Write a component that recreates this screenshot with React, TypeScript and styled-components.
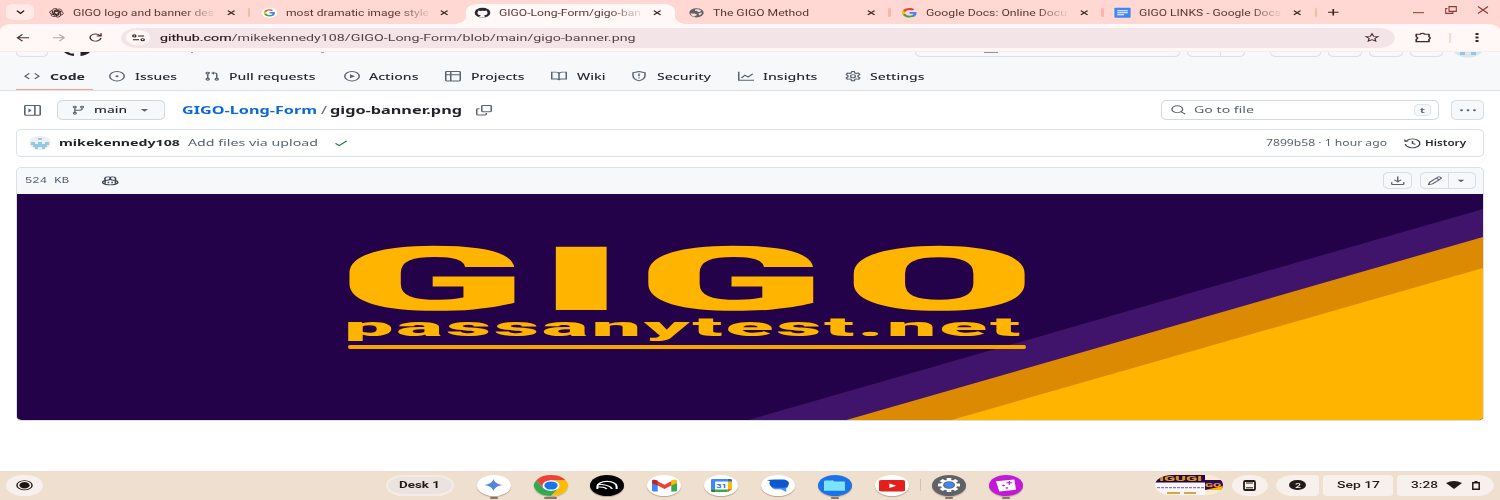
import React, { useLayoutEffect, useRef } from "react";
import styled, { createGlobalStyle, css } from "styled-components";

const Global = createGlobalStyle`
  html, body { margin: 0; padding: 0; }
  body { width: 1500px; height: 500px; overflow: hidden; background: #fff; }
  * { box-sizing: border-box; }
`;

/* ---------- shared parts ---------- */

const FitBox = styled.span<{ $w: number; $ml?: number; $fade?: boolean }>`
  display: block;
  flex: none;
  width: ${p => p.$w}px;
  margin-left: ${p => p.$ml ?? 0}px;
  white-space: pre;
  ${p => p.$fade && css`mask-image: linear-gradient(90deg, #000 78%, rgba(0, 0, 0, 0.1) 100%);`}
`;
const FitInner = styled.span`
  display: inline-block;
  transform-origin: 0 50%;
`;

/* Text that is widened to fill exactly `w` pixels. */
function Fit({ w, ml, fade, className, children }: { w: number; ml?: number; fade?: boolean; className?: string; children: React.ReactNode }) {
  const ref = useRef<HTMLSpanElement>(null);
  useLayoutEffect(() => {
    const el = ref.current!;
    el.style.transform = "none";
    el.style.transform = `scaleX(${w / el.getBoundingClientRect().width})`;
  }, [w]);
  return (
    <FitBox className={className} $w={w} $ml={ml} $fade={fade}>
      <FitInner ref={ref}>{children}</FitInner>
    </FitBox>
  );
}

const Glyph = styled.span<{ $w: number; $h: number; $ml?: number; $c?: string }>`
  display: block;
  flex: none;
  width: ${p => p.$w}px;
  height: ${p => p.$h}px;
  margin-left: ${p => p.$ml ?? 0}px;
  color: ${p => p.$c ?? "#59636e"};
  svg { display: block; width: 100%; height: 100%; overflow: visible; }
`;

type ArtProps = { w: number; h: number; ml?: number; c?: string; box?: string; children: React.ReactNode };
const Art = ({ w, h, ml, c, box = "0 0 24 24", children }: ArtProps) => (
  <Glyph $w={w} $h={h} $ml={ml} $c={c}>
    <svg viewBox={box} preserveAspectRatio="none" fill="none">{children}</svg>
  </Glyph>
);

const OCT: Record<string, React.ReactNode> = {
  code: <path d="m10.800 3.800 4.200 4.200-4.200 4.200M5.200 3.800 1 8l4.200 4.200" />,
  issue: <><circle cx="8" cy="8" r="7.250" /><circle cx="8" cy="8" r="1.500" fill="currentColor" stroke="none" /></>,
  pull: (
    <>
      <circle cx="3.750" cy="3.250" r="1.500" /><circle cx="3.750" cy="12.750" r="1.500" /><circle cx="12.750" cy="12.750" r="1.500" />
      <path d="M3.750 5v6M9.500 3.250H11A1.750 1.750 0 0 1 12.750 5v6" /><path d="M10 .6v5.300L7.100 3.250Z" fill="currentColor" stroke="none" />
    </>
  ),
  play: <><circle cx="8" cy="8" r="7.250" /><path d="M6 5v6l5-3Z" fill="currentColor" stroke="none" /></>,
  table: <path d="M1.750.75h12.500a1 1 0 0 1 1 1v12.500a1 1 0 0 1-1 1H1.750a1 1 0 0 1-1-1V1.750a1 1 0 0 1 1-1ZM.75 5.750h14.500M5.750.75v14.500" />,
  book: <path d="M8 4.750a3 3 0 0 0-3-3H.75v10.500h4.500A3 3 0 0 1 8 13.500a3 3 0 0 1 2.750-1.250h4.500V1.750H11a3 3 0 0 0-3 3ZM8 4.750v8.500" />,
  shield: <><path d="M8 .9 2 2.700V7c0 3.600 2.300 6.700 6 8.200 3.700-1.500 6-4.600 6-8.200V2.700Z" strokeLinejoin="round" /><path d="M8 4v4.200M8 10v1.700" /></>,
  graph: <path d="M.75 1v13.250H16M3.500 10.500 7 6.500l3 3 4.800-5" />,
  gear: (
    <>
      <circle cx="8" cy="8" r="2.400" />
      <path strokeLinejoin="round" d="M6.700.9h2.600l.5 2.200 1.400.8 2.200-.8 1.400 2.300L13.100 7v2l1.700 1.600-1.400 2.300-2.200-.8-1.400.8-.5 2.200H6.700l-.5-2.200-1.400-.8-2.200.8-1.400-2.300L2.900 9V7L1.200 5.400l1.400-2.300 2.200.8 1.400-.8Z" />
    </>
  ),
  sidebar: <><path d="M1.750.75h12.500a1 1 0 0 1 1 1v12.500a1 1 0 0 1-1 1H1.750a1 1 0 0 1-1-1V1.750a1 1 0 0 1 1-1ZM10.250.75v14.500" /><path d="M4.200 5v6l3-3Z" fill="currentColor" stroke="none" /></>,
  branch: (
    <>
      <circle cx="4.250" cy="3.250" r="1.500" /><circle cx="4.250" cy="12.750" r="1.500" /><circle cx="12.250" cy="3.250" r="1.500" />
      <path d="M4.250 5v6M12.250 5v.5A2.500 2.500 0 0 1 9.750 8H4.500" />
    </>
  ),
  down: <path d="m4.200 6.200 3.400 3.900c.2.2.6.2.8 0l3.400-3.900Z" fill="currentColor" stroke="none" />,
  copy: <path d="M6.750.75h7.500a1 1 0 0 1 1 1v7.500a1 1 0 0 1-1 1h-7.500a1 1 0 0 1-1-1v-7.500a1 1 0 0 1 1-1ZM3.500 5.750H1.750a1 1 0 0 0-1 1v7.500a1 1 0 0 0 1 1h7.500a1 1 0 0 0 1-1V12.500" />,
  search: <><circle cx="6.700" cy="7" r="5.700" /><path d="m10.900 11.200 4.300 4" /></>,
  dots: <g fill="currentColor" stroke="none"><circle cx="1.500" cy="8" r="1.450" /><circle cx="8" cy="8" r="1.450" /><circle cx="14.500" cy="8" r="1.450" /></g>,
  check: <path d="m2.500 8.500 3.750 3.700 7.500-7.700" />,
  history: <><path d="M1.200 9.200A6.900 6.900 0 1 0 2.600 4" strokeWidth="1.400" /><path d="M.3 1.800v3.900h3.900Z" fill="currentColor" stroke="none" /><path d="M8 4.500v4l2.800 1.400" strokeWidth="1.400" /></>,
  download: <path d="M1.750 10.500v2.750a1 1 0 0 0 1 1h10.500a1 1 0 0 0 1-1V10.500M8 1v8.500M4.400 6.300 8 9.800l3.600-3.500" />,
  pencil: <path strokeLinejoin="round" d="m11.500 1.700a1.200 1.200 0 0 1 1.700 0l1.100 1.100a1.200 1.200 0 0 1 0 1.700L5.700 13.100 1.600 14.400l1.300-4.100ZM9.700 3.600l2.700 2.700" />,
  copilot: (
    <>
      <path d="M3 7.500C1.500 8 .75 9 .75 10v1.500C2 13.300 5 14.800 8 14.800s6-1.500 7.250-3.300V10c0-1-.75-2-2.250-2.500" />
      <path d="M3 6.700c-.8-3.500.2-5 2.600-5.200C7.300 1.400 8 2 8 3.500S7.300 7 5.300 7.100C4 7.200 3 6.700 3 6.700ZM13 6.700c.8-3.500-.2-5-2.600-5.200C8.700 1.400 8 2 8 3.500S8.700 7 10.700 7.100c1.300.1 2.300-.4 2.300-.4ZM3 7v6M13 7v6M6.200 9.500v2.500M9.800 9.500v2.500" />
    </>
  ),
};

type OctProps = { n: string; w?: number; h?: number; ml?: number; c?: string };
const Oct = ({ n, w = 16, h = 10.4, ml, c }: OctProps) => (
  <Art w={w} h={h} ml={ml} c={c} box="0 0 16 16"><g stroke="currentColor" strokeWidth="1.5">{OCT[n]}</g></Art>
);

/* ---------- browser frame ---------- */

const Screen = styled.div`
  width: 1500px;
  height: 500px;
  display: flex;
  flex-direction: column;
  overflow: hidden;
  background: #fff;
  font-family: "Noto Sans", sans-serif;
`;
const TabStrip = styled.div`
  height: 24px;
  flex: none;
  display: flex;
  background: #ffd8d4;
  font: 400 8.4px/12px Roboto, sans-serif;
  color: #5b3532;
`;
const TabSearch = styled.div`
  width: 28px;
  height: 16px;
  margin: 4px 5px 0 6px;
  display: flex;
  align-items: center;
  justify-content: center;
  background: #ffeae8;
  border-radius: 8px / 5px;
`;
const TabItem = styled.div<{ $active?: boolean }>`
  position: relative;
  width: 213.4px;
  flex: none;
  display: flex;
  align-items: center;
  padding: 1px 0 0 9.5px;
  ${p => p.$active && css`
    &::before {
      content: "";
      position: absolute;
      z-index: 0;
      inset: 4px 4px 0 0;
      background: #fff8f6;
      border-radius: 12px 12px 0 0 / 7px 7px 0 0;
    }
    &::after {
      content: "";
      position: absolute;
      left: -12px;
      right: -8px;
      bottom: 0;
      height: 7px;
      background:
        radial-gradient(12px 7px at 0 0, transparent 98%, #fff8f6) left / 12px 7px no-repeat,
        radial-gradient(12px 7px at 100% 0, transparent 98%, #fff8f6) right / 12px 7px no-repeat;
    }
  `}
  > * { z-index: 1; }
`;
const TabRule = styled.span`
  width: 2.6px;
  height: 9.5px;
  margin-left: 13px;
  border-radius: 1.3px;
  background: #ffb4ab;
`;
const PlusSlot = styled.div`
  display: flex;
  align-items: center;
  margin-left: 8.5px;
  padding-top: 1px;
`;
const WindowButtons = styled.div`
  display: flex;
  align-items: flex-start;
  padding-top: 6px;
  margin-left: auto;
  margin-right: 11px;
`;
const ToolbarBack = styled.div`
  flex: none;
  background: linear-gradient(#ffd8d4 12px, #fff8f6 12px);
`;
const Toolbar = styled.div`
  height: 28px;
  display: flex;
  align-items: center;
  background: #fff8f6;
  padding-left: 16px;
  border-bottom: 1px solid #fdebe8;
  border-radius: 12px 12px 0 0 / 7px 7px 0 0;
`;
const Omnibox = styled.div`
  width: 1274px;
  height: 20px;
  margin-left: 19px;
  display: flex;
  align-items: center;
  padding-left: 5px;
  background: #f2e4e7;
  border-radius: 16px / 10px;
  font: 400 9.3px/14px Roboto, sans-serif;
  color: #56413f;
`;
const Host = styled.span`
  color: #2b1a19;
  -webkit-text-stroke: 0.15px #2b1a19;
`;
const Url = styled(Fit)`
  padding-top: 1px;
`;
const SiteChip = styled.div`
  width: 24px;
  height: 15px;
  display: flex;
  align-items: center;
  justify-content: center;
  border-radius: 50%;
  background: #fff8f6;
`;
const ToolRule = styled.span`
  width: 2.4px;
  height: 10px;
  margin-left: 17.5px;
  background: #ffd8d4;
`;

const CloseX = ({ ml }: { ml: number }) => (
  <Art w={8.4} h={5.4} ml={ml} c="#3c2523" box="0 0 10 10"><path d="M1 1 9 9M9 1 1 9" stroke="currentColor" strokeWidth="1.8" /></Art>
);

const GoogleG = () => (
  <>
    <path d="M22.500 12.300c0-.8-.1-1.500-.2-2.300H12v4.400h6c-.3 1.400-1.100 2.600-2.200 3.400v2.800h3.500c2.100-1.900 3.200-4.800 3.200-8.300Z" fill="#4285f4" />
    <path d="M12 23c3 0 5.500-1 7.300-2.700l-3.500-2.700c-1 .7-2.300 1.100-3.800 1.100-2.900 0-5.300-1.900-6.200-4.500H2.200V17C4 20.500 7.700 23 12 23Z" fill="#34a853" />
    <path d="M5.800 14.200c-.2-.7-.4-1.400-.4-2.200s.1-1.500.4-2.200V7H2.200C1.400 8.500 1 10.200 1 12s.4 3.500 1.200 5l3.600-2.800Z" fill="#fbbc05" />
    <path d="M12 5.400c1.600 0 3.100.6 4.200 1.600l3.100-3.100C17.500 2.100 15 1 12 1 7.700 1 4 3.500 2.200 7l3.600 2.800C6.700 7.200 9.100 5.400 12 5.400Z" fill="#ea4335" />
  </>
);

const Favicons: Record<string, React.ReactNode> = {
  gpt: (
    <g stroke="#3a2422" strokeWidth="1.5">
      {[0, 60, 120, 180, 240, 300].map(a => (
        <path key={a} transform={`rotate(${a} 12 12)`} d="M8.500 14V6.500l5-3a4.600 4.600 0 0 1 7 5.200M12 8l6 3.500v5.300" />
      ))}
    </g>
  ),
  google: <><circle cx="12" cy="12" r="12.5" fill="#fff" /><g transform="translate(2 2) scale(.83)"><GoogleG /></g></>,
  googleBig: <g transform="translate(-1 -1) scale(1.08)"><GoogleG /></g>,
  github: (
    <>
      <circle cx="12" cy="12" r="12.5" fill="#24292f" />
      <path d="M8.500 24v-3.500c-2.500.5-3.300-1-3.900-2.200M15.500 24v-4.200c0-1-.3-1.600-.8-2 3-.4 5.300-1.600 5.300-5.600 0-1.300-.4-2.300-1.200-3.200.2-.6.300-1.700-.1-3-1.300 0-2.300.7-3.200 1.300a12 12 0 0 0-7 0C7.600 6.700 6.600 6 5.300 6c-.4 1.300-.3 2.400-.1 3A4.600 4.600 0 0 0 4 12.200c0 4 2.300 5.200 5.300 5.600-.5.400-.8 1-.8 2V24Z" fill="#fff8f6" />
    </>
  ),
  globe: (
    <>
      <circle cx="12" cy="12" r="11.5" fill="#5f6368" />
      <path d="M2.500 13c3 1.500 6-.5 7.500 1.500s3 1 2.500 3-3 1.500-3.500 3.800C5 20.500 2.500 17 2.500 13ZM10 3.500c4-1.500 8 .5 9.500 3l-2 3.500-3.500-.5-1.500-2.500-3 .5ZM15 13l5.500-1.500c.5 3-1.500 5.500-3.500 7l-1-2.500Z" fill="#ffd8d4" />
    </>
  ),
  docs: (
    <>
      <rect x="-1" y="-.5" width="26" height="25" rx="2" fill="#4285f4" />
      <path d="M3.500 7h17M3.500 12h17M3.500 17h11" stroke="#fff" strokeWidth="2.4" />
    </>
  ),
};

const TABS = [
  { icon: "gpt", title: "GIGO logo and banner des", w: 141, fade: true, rule: true },
  { icon: "google", title: "most dramatic image style", w: 143, fade: true },
  { icon: "github", title: "GIGO-Long-Form/gigo-ban", w: 142, fade: true, active: true },
  { icon: "globe", title: "The GIGO Method", w: 96, rule: true },
  { icon: "googleBig", title: "Google Docs: Online Docu", w: 141, fade: true, rule: true },
  { icon: "docs", title: "GIGO LINKS - Google Docs", w: 142, fade: true, rule: true },
];

function Tabs() {
  return (
    <TabStrip>
      <TabSearch>
        <Art w={9} h={4} c="#2b1a19" box="0 0 10 6"><path d="m1 1 4 4 4-4" stroke="currentColor" strokeWidth="1.8" /></Art>
      </TabSearch>
      {TABS.map(t => (
        <TabItem key={t.title} $active={t.active}>
          <Art w={15} h={9.6}>{Favicons[t.icon]}</Art>
          <Fit w={t.w} ml={9} fade={t.fade}>{t.title}</Fit>
          <CloseX ml={154 - t.w} />
          {t.rule && <TabRule />}
        </TabItem>
      ))}
      <PlusSlot>
        <Art w={10.5} h={6.6} c="#3c2523" box="0 0 10 10"><path d="M5 0v10M0 5h10" stroke="currentColor" strokeWidth="1.6" /></Art>
      </PlusSlot>
      <WindowButtons>
        <Art w={11} h={8} c="#8c3a33" box="0 0 11 8"><path d="M0 6.700h11" stroke="currentColor" strokeWidth="1" /></Art>
        <Art w={12} h={8} ml={21} c="#8c3a33" box="0 0 12 8"><path d="M4 .6h7.300v4.800H4ZM2.500 2.500H.7v4.900h7.200V6" stroke="currentColor" strokeWidth="1.100" /></Art>
        <Art w={12} h={8} ml={20} c="#8c3a33" box="0 0 12 8"><path d="m1 .5 10 7M11 .5l-10 7" stroke="currentColor" strokeWidth="1.100" /></Art>
      </WindowButtons>
    </TabStrip>
  );
}

function NavBar() {
  return (
    <ToolbarBack>
      <Toolbar>
        <Art w={13} h={7.6} c="#4a2f2c" box="0 0 14 12"><path d="M14 6H1.500M7 .7 1.500 6 7 11.300" stroke="currentColor" strokeWidth="1.5" /></Art>
        <Art w={12.5} h={7.6} ml={23.5} c="#b5a5a3" box="0 0 14 12"><path d="M0 6h12.500M7 .7 12.500 6 7 11.300" stroke="currentColor" strokeWidth="1.5" /></Art>
        <Art w={13} h={8.6} ml={24} c="#4a2f2c" box="0 0 16 16"><path d="M13.500 4.500A6.700 6.700 0 1 0 14.700 9M14.800.5v5.200H9.500" stroke="currentColor" strokeWidth="1.8" /></Art>
        <Omnibox>
          <SiteChip>
            <Art w={13} h={7.6} c="#2b1a19" box="0 0 14 12"><circle cx="2.500" cy="3" r="1.700" stroke="currentColor" strokeWidth="1.5" /><circle cx="11.500" cy="9" r="1.700" stroke="currentColor" strokeWidth="1.5" /><path d="M6.500 3H13M1 9h6.500" stroke="currentColor" strokeWidth="1.6" /></Art>
          </SiteChip>
          <Url w={475.5} ml={9.5}><Host>github.com</Host>/mikekennedy108/GIGO-Long-Form/blob/main/gigo-banner.png</Url>
          <Art w={14} h={9} ml={729.5} c="#3c2523"><path d="m12 2 3 6.800 7.500.7-5.600 5 1.600 7.300L12 18l-6.500 3.800 1.600-7.300-5.600-5L9 8.800Z" stroke="currentColor" strokeWidth="2" /></Art>
        </Omnibox>
        <Art w={18} h={11} ml={18.5} c="#3c2523"><path d="M3 5h5.500a2.800 2.800 0 0 1 5.500 0h6v5.500a2.800 2.800 0 0 1 0 5V21H3v-5a3 3 0 0 0 0-5.500Z" stroke="currentColor" strokeWidth="2.2" strokeLinejoin="round" /></Art>
        <ToolRule />
        <Art w={4} h={9} ml={23.5} c="#3c2523" box="0 0 4 9"><path d="M.5 0h3v1.900h-3ZM.5 3.500h3v1.900h-3ZM.5 7h3v1.900h-3Z" fill="currentColor" /></Art>
      </Toolbar>
    </ToolbarBack>
  );
}

/* ---------- GitHub page ---------- */

const RepoHead = styled.div`
  height: 39px;
  flex: none;
  display: flex;
  flex-direction: column;
  background: #f6f8fa;
  border-bottom: 1px solid #d9e0e6;
`;
const CutRow = styled.div`
  height: 5px;
  display: flex;
  align-items: flex-start;
  padding-left: 16px;
`;
const CutBox = styled.div<{ $w: number; $ml?: number; $split?: boolean }>`
  width: ${p => p.$w}px;
  height: 4.5px;
  flex: none;
  margin-left: ${p => p.$ml ?? 0}px;
  border: 1px solid #d9dfe5;
  border-top: 0;
  border-radius: 0 0 6px 6px / 0 0 4px 4px;
  background: ${p => (p.$split ? "linear-gradient(#d9dfe5, #d9dfe5) 32px 0 / 1px 100% no-repeat" : "none")};
`;
const RepoNav = styled.nav`
  flex: 1;
  display: flex;
  padding-left: 16px;
  font-size: 9.2px;
  line-height: 12px;
  color: #25292e;
`;
const NavItem = styled.div<{ $mr: number; $active?: boolean }>`
  display: flex;
  align-items: center;
  gap: 9.5px;
  padding: 7px 8px 0;
  margin-right: ${p => p.$mr - 16}px;
  font-weight: ${p => (p.$active ? 700 : 500)};
  border-bottom: 1.5px solid ${p => (p.$active ? "#fba08c" : "transparent")};
`;
const NAV: [string, string, number, number][] = [
  ["Code", "code", 35, 24.5],
  ["Issues", "issue", 42, 27],
  ["Pull requests", "pull", 86.5, 28],
  ["Actions", "play", 49.5, 26.5],
  ["Projects", "table", 53.5, 27],
  ["Wiki", "book", 28.5, 26],
  ["Security", "shield", 54, 27],
  ["Insights", "graph", 54.5, 27],
  ["Settings", "gear", 54.5, 27],
];

const Page = styled.main`
  flex: 1;
  padding: 0 16px;
`;
const FileNav = styled.div`
  height: 38px;
  display: flex;
  align-items: center;
  padding-left: 8px;
  font-size: 10px;
  line-height: 14px;
`;
const BranchButton = styled.div`
  width: 108px;
  height: 19.5px;
  margin-left: 16px;
  display: flex;
  align-items: center;
  padding-left: 13px;
  background: #f6f8fa;
  border: 1px solid #d1d9e0;
  border-radius: 6px / 4px;
  font-size: 9.2px;
  font-weight: 500;
  color: #25292e;
`;
const RepoLink = styled(Fit)`
  font-weight: 700;
  color: #0969da;
`;
const Crumb = styled(Fit)`
  font-weight: 700;
  color: #1f2328;
`;
const Slash = styled(Fit)`
  color: #59636e;
`;
const FindBox = styled.div`
  width: 278.5px;
  height: 20px;
  margin-left: auto;
  display: flex;
  align-items: center;
  padding-left: 9px;
  border: 1px solid #d1d9e0;
  border-radius: 6px / 4px;
  font-size: 9.2px;
  color: #59636e;
`;
const Key = styled.div`
  width: 17px;
  height: 12px;
  margin-left: auto;
  margin-right: 7px;
  display: flex;
  align-items: center;
  justify-content: center;
  border: 1px solid #dde3e8;
  border-radius: 5px / 3px;
  background: #f6f8fa;
  font-size: 7.5px;
  line-height: 8px;
  font-weight: 600;
`;
const SquareButton = styled.div<{ $w: number; $h: number; $ml?: number }>`
  width: ${p => p.$w}px;
  height: ${p => p.$h}px;
  margin-left: ${p => p.$ml ?? 0}px;
  display: flex;
  align-items: center;
  justify-content: center;
  background: #f6f8fa;
  border: 1px solid #d6dde3;
  border-radius: 6px / 4px;
`;
const CommitBar = styled.div`
  height: 28px;
  display: flex;
  align-items: center;
  padding: 0 17px 0 12px;
  border: 1px solid #dde3e9;
  border-radius: 6px / 4px;
  font-size: 9.2px;
  line-height: 12px;
  color: #59636e;
`;
const Author = styled(Fit)`
  font-weight: 700;
  color: #1f2328;
`;
const CommitMeta = styled(Fit)`
  font-size: 8.2px;
`;
const HistoryLabel = styled(Fit)`
  padding-top: 0.5px;
  font-size: 8px;
  font-weight: 600;
  color: #25292e;
`;
const FileCard = styled.section`
  height: 254px;
  margin-top: 9.5px;
  overflow: hidden;
  border: 1px solid #d9dfe5;
  border-radius: 6px / 4px;
`;
const FileHead = styled.div`
  height: 26px;
  display: flex;
  align-items: center;
  padding: 0 7px 0 8px;
  background: #f6f8fa;
`;
const FileSize = styled(Fit)`
  font: 400 8.2px/12px "Liberation Mono", monospace;
  color: #59636e;
`;
const Split = styled.div`
  width: 56.5px;
  height: 17px;
  margin-left: 8px;
  display: flex;
  align-items: center;
  background: linear-gradient(#d6dde3, #d6dde3) 27px 0 / 1px 100% no-repeat #f6f8fa;
  border: 1px solid #d6dde3;
  border-radius: 6px / 4px;
`;
const Spacer = styled.span`flex: 1;`;

const Banner = styled.div`
  position: relative;
  height: 227px;
  background: #240249;
  > svg { position: absolute; inset: 0; width: 100%; height: 100%; }
`;
const BannerCopy = styled.div`
  position: relative;
  padding: 49px 0 0 331px;
  font-family: Roboto, sans-serif;
  font-weight: 900;
  color: #ffb400;
`;
const Wordmark = styled(Fit)`
  height: 73px;
  font-size: 89px;
  line-height: 73px;
  font-stretch: 75%;
  font-weight: 840;
  letter-spacing: 2px;
`;
const LastLetter = styled.span`
  margin-left: 1.4px;
`;
const Tagline = styled(Fit)`
  height: 27px;
  font-size: 25px;
  line-height: 24px;
  letter-spacing: 0.8px;
`;
const Underline = styled.div`
  width: 678px;
  height: 4.5px;
  margin-top: 2px;
  border-radius: 2px;
  background: #f7a600;
`;

const Identicon = ({ w, h }: { w: number; h: number }) => (
  <Art w={w} h={h} box="0 0 22 14">
    <ellipse cx="11" cy="7" rx="11" ry="7" fill="#eceef0" />
    <path d="M9 2h4v2H9ZM2 6h4v2h3V6h4v2h3V6h4v3h-2v2h-2v2h-3v-2H9v2H6v-2H4V9H2Z" fill="#93c9e0" />
  </Art>
);

const AvatarCut = styled.div`
  width: 28px;
  height: 6px;
  margin-left: 11px;
  overflow: hidden;
  svg { display: block; }
`;

function Repo() {
  return (
    <>
      <RepoHead>
        <CutRow>
          <CutBox $w={32} />
          <Art w={26} h={4} ml={16} c="#1f2328" box="0 0 26 4"><path d="M0 0h4l3 1.500h3V4C6 3.600 2.500 2.500 0 0ZM16.500 0H26c-2 2-5 3.500-9.500 4Z" fill="currentColor" /></Art>
          <Art w={2} h={1} ml={101} c="#9aa3ab" box="0 0 2 1"><path d="M0 0h2v1H0Z" fill="currentColor" /></Art>
          <Art w={3} h={1} ml={128} c="#9aa3ab" box="0 0 3 1"><path d="M0 0h3v1H0Z" fill="currentColor" /></Art>
          <CutBox $w={265} $ml={590.5}>
            <Art w={14} h={1} ml={68} box="0 0 14 1"><path d="M0 0h14v1H0Z" fill="#8c959f" /></Art>
          </CutBox>
          <CutBox $w={58} $ml={7} $split />
          <CutBox $w={51} $ml={25} />
          <CutBox $w={34} $ml={7} />
          <CutBox $w={34} $ml={7} />
          <CutBox $w={33} $ml={7} />
          <AvatarCut>
            <svg width="28" height="6" viewBox="0 0 28 6"><path d="M0 0h28c-3 3.500-8 5.500-14 5.500S3 3.500 0 0Z" fill="#dfe4e8" /><path d="M6 0h5v3H6ZM17 0h5v3h-5Z" fill="#8cc8e2" /></svg>
          </AvatarCut>
        </CutRow>
        <RepoNav>
          {NAV.map(([label, icon, w, mr], i) => (
            <NavItem key={label} $mr={mr} $active={i === 0}>
              <Oct n={icon} />
              <Fit w={w}>{label}</Fit>
            </NavItem>
          ))}
        </RepoNav>
      </RepoHead>
      <Page>
        <FileNav>
          <Oct n="sidebar" w={17} h={10.8} />
          <BranchButton>
            <Oct n="branch" w={14.5} h={10.4} />
            <Fit w={33} ml={8.5}>main</Fit>
            <Oct n="down" w={15} ml={9.5} />
          </BranchButton>
          <RepoLink w={135} ml={16.5}>GIGO-Long-Form</RepoLink>
          <Slash w={6} ml={4.5}>/</Slash>
          <Crumb w={132} ml={3}>gigo-banner.png</Crumb>
          <Oct n="copy" w={16} h={10.4} ml={14} />
          <FindBox>
            <Oct n="search" w={15} h={9.6} />
            <Fit w={60} ml={8.5}>Go to file</Fit>
            <Key><Fit w={5}>t</Fit></Key>
          </FindBox>
          <SquareButton $w={33} $h={20} $ml={12}><Oct n="dots" /></SquareButton>
        </FileNav>
        <CommitBar>
          <Identicon w={22} h={14} />
          <Author w={121} ml={8}>mikekennedy108</Author>
          <Fit w={130} ml={8}>Add files via upload</Fit>
          <Oct n="check" w={16} h={10} ml={14.5} c="#1a7f37" />
          <Spacer />
          <CommitMeta w={121}>7899b58 · 1 hour ago</CommitMeta>
          <Oct n="history" ml={17} w={17} c="#3d444d" />
          <HistoryLabel w={41} ml={4}>History</HistoryLabel>
        </CommitBar>
        <FileCard>
          <FileHead>
            <FileSize w={44}>524 KB</FileSize>
            <Oct n="copilot" ml={33} w={16.5} h={9.6} c="#3d444d" />
            <Spacer />
            <SquareButton $w={28.5} $h={17}><Oct n="download" w={15.5} h={9.6} /></SquareButton>
            <Split>
              <Oct n="pencil" ml={6} w={15.5} h={9.6} />
              <Oct n="down" ml={11.5} w={14} h={9.6} />
            </Split>
          </FileHead>
          <Banner>
            <svg viewBox="0 0 1466 227" preserveAspectRatio="none">
              <path d="M728 227 1466 15v212Z" fill="#40146a" />
              <path d="M826 227 1466 43v184Z" fill="#dd8a03" />
              <path d="M931 227 1466 74v153Z" fill="#ffb400" />
            </svg>
            <BannerCopy>
              <Wordmark w={711} ml={-13.5}>GIG<LastLetter>O</LastLetter></Wordmark>
              <Tagline w={679} ml={-4.5}>passanytest.net</Tagline>
              <Underline />
            </BannerCopy>
          </Banner>
        </FileCard>
      </Page>
    </>
  );
}

/* ---------- shelf ---------- */

const Shelf = styled.footer`
  height: 29.5px;
  flex: none;
  display: flex;
  align-items: center;
  background: #efdfcf;
  padding: 0 6px;
  font: 500 9.3px/12px Roboto, sans-serif;
  color: #221a16;
`;
const Pill = styled.div<{ $w: number; $ml?: number; $r?: string }>`
  width: ${p => p.$w}px;
  height: 21px;
  flex: none;
  margin-left: ${p => p.$ml ?? 0}px;
  display: flex;
  align-items: center;
  justify-content: center;
  background: #f8f0ec;
  border-radius: ${p => p.$r ?? "17px / 10.5px"};
`;
const DeskPill = styled(Pill)`
  background: #ebe3df;
  border: 2px solid #f7ece5;
  font-weight: 700;
`;
const Apps = styled.div`
  display: flex;
  align-items: center;
  gap: 22.85px;
  margin-left: 23.3px;
`;
const AppIcon = styled.div<{ $bg: string; $run?: number }>`
  position: relative;
  width: 34px;
  height: 21px;
  flex: none;
  display: flex;
  align-items: center;
  justify-content: center;
  border-radius: 50%;
  background: ${p => p.$bg};
  box-shadow: 0 1px 1px rgba(90, 60, 40, 0.35);
  ${p => p.$run && css`
    &::after {
      content: "";
      position: absolute;
      left: calc(50% - ${p.$run / 2}px);
      bottom: -3px;
      width: ${p.$run}px;
      height: 1.6px;
      border-radius: 1px;
      background: #8a766a;
    }
  `}
`;
const ShelfRule = styled.span`
  width: 1px;
  height: 12px;
  margin: 0 -11.9px 0 -11.5px;
  background: #d2c2b3;
`;
const Preview = styled.div`
  width: 68px;
  height: 20px;
  margin-left: 132px;
  border-radius: 17px / 10px;
  overflow: hidden;
  background: #fff0d8;
  svg { display: block; }
`;
const Count = styled.div`
  width: 17px;
  height: 10.4px;
  display: flex;
  align-items: center;
  justify-content: center;
  border-radius: 50%;
  background: #221a16;
  color: #f8f0ec;
  font-size: 8px;
  line-height: 9px;
`;

function ShelfBar() {
  return (
    <Shelf>
      <Pill $w={37}>
        <Art w={17} h={10.5} c="#1d1512"><circle cx="12" cy="12" r="10.7" stroke="currentColor" strokeWidth="2" /><circle cx="12" cy="12" r="7.2" fill="currentColor" /></Art>
      </Pill>
      <DeskPill $w={68} $ml={342.5}><Fit w={41}>Desk 1</Fit></DeskPill>
      <Apps>
        <AppIcon $bg="#fff" $run={8}>
          <Art w={19} h={12}>
            <defs><linearGradient id="spark" x1="0" y1="24" x2="24" y2="0" gradientUnits="userSpaceOnUse"><stop offset="0" stopColor="#1b91f3" /><stop offset=".5" stopColor="#4f86dd" /><stop offset="1" stopColor="#9b72cb" /></linearGradient></defs>
            <path d="M12 0c1.300 6.500 5.500 10.700 12 12-6.500 1.300-10.700 5.500-12 12-1.300-6.500-5.500-10.700-12-12 6.500-1.300 10.700-5.500 12-12Z" fill="url(#spark)" />
          </Art>
        </AppIcon>
        <AppIcon $bg="#fff" $run={13}>
          <Art w={34} h={21}>
            <path d="M12 24A12 12 0 0 0 22.400 6H12v6l5.200 3Z" fill="#fbbc04" />
            <path d="M12 24A12 12 0 0 1 1.600 6L6.800 15l5.200 3 5.200-3Z" fill="#34a853" />
            <path d="M1.600 6A12 12 0 0 1 22.400 6H12L6.800 15Z" fill="#ea4335" />
            <circle cx="12" cy="12" r="6" fill="#fff" /><circle cx="12" cy="12" r="4.7" fill="#1a73e8" />
          </Art>
        </AppIcon>
        <AppIcon $bg="#000">
          <Art w={22} h={11}><path d="M1.500 19.500V14a10.500 11 0 0 1 21 0v5.500M1.500 10.500A13 12 0 0 1 17.500 19.500M1.500 15.500A8 6 0 0 1 11.500 19.500" stroke="#fff" strokeWidth="2.2" /></Art>
        </AppIcon>
        <AppIcon $bg="#fff">
          <Art w={25} h={13}>
            <path d="M0 3h5.500v20H1.500A1.500 1.500 0 0 1 0 21.500Z" fill="#4285f4" /><path d="M18.500 3H24v18.500a1.500 1.500 0 0 1-1.500 1.500h-4Z" fill="#34a853" />
            <path d="m5.500 4 6.500 6.500L18.500 4v8L12 18.500 5.500 12Z" fill="#ea4335" /><path d="M0 8V4c0-3 3-3.500 5.500-1v9Z" fill="#c5221f" /><path d="M24 8V4c0-3-3-3.500-5.500-1v9Z" fill="#fbbc04" />
          </Art>
        </AppIcon>
        <AppIcon $bg="#fff">
          <Art w={21} h={13}>
            <path d="M2 0h17v5H5v14H0V2a2 2 0 0 1 2-2Z" fill="#4285f4" /><path d="M19 0h3a2 2 0 0 1 2 2v3h-5Z" fill="#1967d2" /><path d="M19 5h5v14h-5Z" fill="#fbbc04" /><path d="M5 19h14v5H5Z" fill="#34a853" /><path d="M0 19h5v5H2a2 2 0 0 1-2-2Z" fill="#188038" /><path d="m19 24v-5h5Z" fill="#ea4335" /><path d="M5 5h14v14H5Z" fill="#fff" />
            <text x="12" y="15.8" fontSize="10.5" fontWeight="700" textAnchor="middle" fill="#1a73e8" fontFamily="Roboto">31</text>
          </Art>
        </AppIcon>
        <AppIcon $bg="#fff">
          <Art w={22} h={13}>
            <path d="M2 6h14a7 6.500 0 0 1 5 11v7l-6-5H11C6 19 4.500 15 4.500 12 4.500 9 2 6 2 6Z" fill="#4a8df8" />
            <path d="M8 1h9.500a6.500 7.500 0 0 1 0 15H8.500A7 7.500 0 0 1 3.500 5C2.500 3.500 0 2 0 2Z" fill="#0b57d0" />
          </Art>
        </AppIcon>
        <AppIcon $bg="#1a73e8" $run={8}>
          <Art w={21} h={11.5}><path d="M0 2.500A1.500 1.500 0 0 1 1.500 1H9l3 3h10.500A1.500 1.500 0 0 1 24 5.500v17H0Z" fill="#7be4fb" /><path d="M9 1 12 4H24" stroke="#b8f2ff" strokeWidth="1" /></Art>
        </AppIcon>
        <AppIcon $bg="#fff">
          <Art w={26} h={11.5}><rect width="24" height="24" rx="3" fill="#e2201c" /><path d="m9.500 7.500 6.500 4.500-6.500 4.500Z" fill="#fff" /></Art>
        </AppIcon>
        <ShelfRule />
        <AppIcon $bg="#5f6368" $run={8}>
          <Art w={22} h={14}>
            <circle cx="12" cy="12" r="9" fill="#fff" />
            {[0, 45, 90, 135].map(a => <path key={a} transform={`rotate(${a} 12 12)`} d="M9.500 0h5v24h-5Z" fill="#fff" />)}
            <circle cx="12" cy="12" r="6.5" fill="#5f6368" /><circle cx="12" cy="12" r="5" fill="#4285f4" />
          </Art>
        </AppIcon>
        <AppIcon $bg="#c219d8" $run={8}>
          <Art w={20} h={13}><path d="m0 4 22-3 2 19-20 3Z" fill="#fff" /><path d="M16 3.500v7M12.500 7h7M9 10.500v3M7.500 12h3M13 15v3M11.500 16.500h3" stroke="#b31bd0" strokeWidth="1.6" /></Art>
        </AppIcon>
      </Apps>
      <Preview>
        <svg width="68" height="20" viewBox="0 0 68 20">
          <rect width="68" height="20" fill="#fdebd6" /><rect x="42" y="5" width="26" height="10" fill="#2b0a5a" /><path d="m50 15 18-4v4Z" fill="#ffb400" />
          <text x="50" y="12" fontSize="6" fontWeight="900" fontFamily="Roboto" fill="#e9a211" textLength="16" lengthAdjust="spacingAndGlyphs">GO</text>
          <rect width="50" height="20" fill="#fbf6fb" /><rect width="50" height="7.500" fill="#240249" />
          <text x="4" y="6" fontSize="8" fontWeight="900" fontFamily="Roboto" fill="#d99a15" textLength="43" lengthAdjust="spacingAndGlyphs">IGUGI</text>
          <path d="M2 12.700h47" stroke="#6c5a9a" strokeWidth="1" strokeDasharray="3 1" />
          <path d="M12 18h13M29 18h12" stroke="#dba53a" strokeWidth="2" />
        </svg>
      </Preview>
      <Pill $w={36} $ml={9}>
        <Art w={13} h={11} c="#221a16" box="0 0 13 11"><rect x="1" y="1" width="11" height="9" rx="1.3" stroke="currentColor" strokeWidth="1.8" /><path d="M3 3h7M3 7.800h7" stroke="currentColor" strokeWidth="1" /></Art>
      </Pill>
      <Pill $w={43} $ml={8.5} $r="17px 4px 4px 17px / 10.5px 3px 3px 10.5px"><Count><Fit w={6}>2</Fit></Count></Pill>
      <Pill $w={70} $ml={4} $r="4px / 3px"><Fit w={43}>Sep 17</Fit></Pill>
      <Pill $w={97} $ml={4} $r="4px 17px 17px 4px / 3px 10.5px 10.5px 3px">
        <Fit w={27}>3:28</Fit>
        <Art w={16} h={8} ml={8.5} c="#221a16" box="0 0 16 8"><path d="M0 2Q8-2 16 2L8 8Z" fill="currentColor" /></Art>
        <Art w={8} h={9} ml={10} c="#221a16" box="0 0 8 9"><path d="M.8 1.800h6.400v6.400H.8Z" stroke="currentColor" strokeWidth="1.5" /><path d="M2.500 0h3v1.500h-3Z" fill="currentColor" /></Art>
      </Pill>
    </Shelf>
  );
}

export default function App() {
  return (
    <Screen>
      <Global />
      <Tabs />
      <NavBar />
      <Repo />
      <ShelfBar />
    </Screen>
  );
}
